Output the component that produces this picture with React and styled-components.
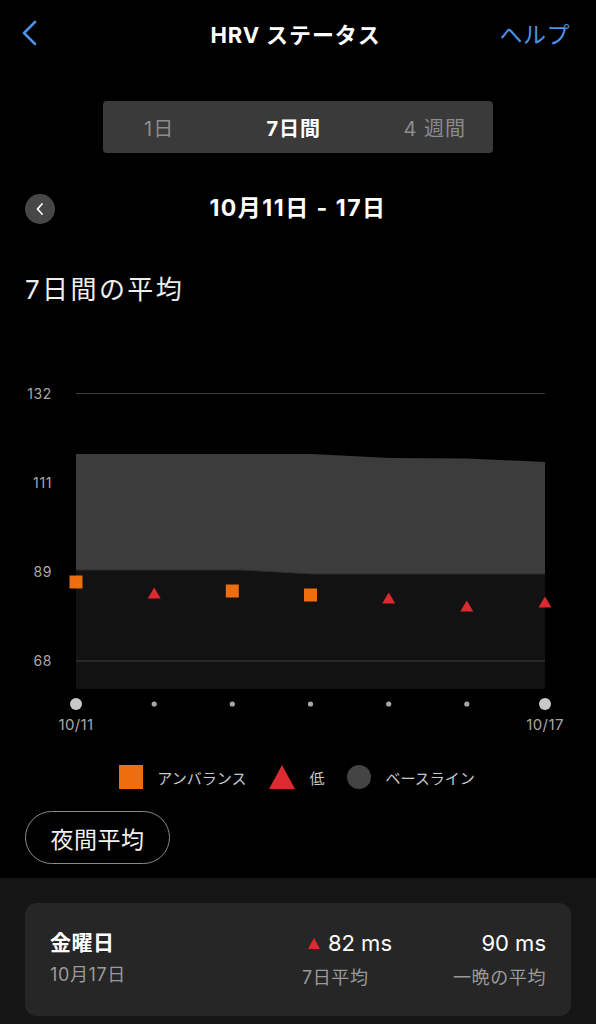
import styled, { createGlobalStyle } from "styled-components";

const GlobalStyle = createGlobalStyle`
  body {
    margin: 0;
    background: #000;
    color: #fff;
    font-family: "Inter", "Noto Sans CJK JP", sans-serif;
  }
`;

const Page = styled.div`
  width: 596px;
  min-height: 1024px;
  background: #000;
`;

const Header = styled.header`
  height: 66px;
  padding: 0 26px 0 21px;
  display: grid;
  grid-template-columns: 1fr auto 1fr;
  align-items: center;
`;

const HeaderTitle = styled.h1`
  margin: 0;
  font-size: 22px;
  font-weight: 700;
  letter-spacing: 0.9px;
`;

const HelpLink = styled.span`
  justify-self: end;
  color: #4a92e8;
  font-size: 23px;
  letter-spacing: 0.5px;
`;

const Segmented = styled.div`
  margin: 35px auto 0;
  width: 390px;
  height: 52px;
  border-radius: 4px;
  background: #3a3a3a;
  display: flex;
  align-items: center;
  justify-content: space-between;
  padding: 0 27px 0 41px;
  box-sizing: border-box;
`;

const Segment = styled.span`
  font-size: 20px;
  letter-spacing: 1px;
  font-weight: ${(p) => (p.$active ? 700 : 400)};
  color: ${(p) => (p.$active ? "#fff" : "#8c8c8c")};
  margin-left: ${(p) => (p.$active ? "10px" : "0")};
`;

const DateRow = styled.div`
  margin-top: 41px;
  height: 30px;
  padding: 0 25px;
  display: grid;
  grid-template-columns: 30px 1fr 30px;
  align-items: center;
`;

const RoundButton = styled.div`
  width: 30px;
  height: 30px;
  border-radius: 50%;
  background: #474747;
  display: flex;
  align-items: center;
  justify-content: center;
`;

const DateTitle = styled.div`
  text-align: center;
  font-size: 23px;
  line-height: 30px;
  font-weight: 700;
  letter-spacing: 1.5px;
  margin-top: -3px;
`;

const Heading = styled.h2`
  margin: 51px 0 0;
  padding-left: 25px;
  line-height: 30px;
  font-size: 26px;
  font-weight: 400;
  letter-spacing: 2.4px;
  color: #eee;
`;

const Chart = styled.svg`
  display: block;
  margin-top: 70px;
`;

const Legend = styled.div`
  margin-top: 30px;
  height: 24px;
  display: flex;
  align-items: center;
  justify-content: center;
  padding-right: 2px;
`;

const LegendItem = styled.div`
  display: flex;
  align-items: center;
  gap: 14px;
  margin-right: 23px;
  &:last-child {
    margin-right: 0;
  }
`;

const LegendText = styled.span`
  font-size: 15px;
  color: #c8c8c8;
`;

const Pill = styled.div`
  margin: 22px 0 0 25px;
  width: 145px;
  height: 53px;
  box-sizing: border-box;
  border: 1.5px solid #8a8a8a;
  border-radius: 27px;
  display: flex;
  align-items: center;
  justify-content: center;
  font-size: 23px;
  letter-spacing: 0.5px;
  color: #f2f2f2;
`;

const Bottom = styled.section`
  margin-top: 14px;
  background: #151515;
  padding: 25px 25px 30px;
`;

const Card = styled.div`
  height: 113px;
  box-sizing: border-box;
  border-radius: 12px;
  background: #262626;
  padding: 26px 25px 0;
  display: grid;
  grid-template-columns: 1fr auto auto;
  column-gap: 61px;
  align-items: start;
`;

const Column = styled.div`
  display: flex;
  flex-direction: column;
  gap: ${(p) => p.$gap}px;
  align-items: ${(p) => (p.$right ? "flex-end" : "flex-start")};
`;

const DayName = styled.div`
  font-size: 21px;
  font-weight: 700;
  line-height: 28px;
  letter-spacing: 0.5px;
`;

const Value = styled.div`
  font-size: 22px;
  line-height: 28px;
  display: flex;
  align-items: center;
  gap: 8px;
  padding-left: ${(p) => p.$indent || 0}px;
`;

const SubText = styled.div`
  font-size: 18px;
  line-height: 24px;
  letter-spacing: 0.6px;
  color: #9a9a9a;
`;

const xs = [76, 154.2, 232.3, 310.5, 388.7, 466.8, 545];
const points = [
  { kind: "sq", y: 582 },
  { kind: "tri", y: 593 },
  { kind: "sq", y: 591 },
  { kind: "sq", y: 595 },
  { kind: "tri", y: 598 },
  { kind: "tri", y: 606 },
  { kind: "tri", y: 602 },
];
const yLabels = [
  { v: "132", y: 394 },
  { v: "111", y: 483 },
  { v: "89", y: 572 },
  { v: "68", y: 661 },
];

const Triangle = ({ cx, cy, w, h, color = "#dc2a30" }) => (
  <polygon
    points={`${cx},${cy - h / 2} ${cx + w / 2},${cy + h / 2} ${cx - w / 2},${cy + h / 2}`}
    fill={color}
  />
);

const HrvChart = () => (
  <Chart width="596" height="360" viewBox="0 375 596 360">
    <rect x="76" y="570" width="469" height="119" fill="#121212" />
    <path
      d="M76 454 L312 454 L390 458 L467 458.5 L545 462 L545 574 L312 574 L240 570 L76 570 Z"
      fill="#3c3c3c"
    />
    <path d="M76 570 L240 570 L312 574 L545 574" stroke="#2b2b2b" strokeWidth="1" fill="none" />
    <line x1="76" x2="545" y1="393.5" y2="393.5" stroke="#3f3f3f" strokeWidth="1.2" />
    <line x1="76" x2="545" y1="661" y2="661" stroke="#3f3f3f" strokeWidth="1.2" />
    {yLabels.map((l) => (
      <text
        key={l.v}
        x="52"
        y={l.y + 5}
        textAnchor="end"
        fontSize="14"
        letterSpacing="0.6"
        fill="#a8a8a8"
        fontFamily="Inter, sans-serif"
      >
        {l.v}
      </text>
    ))}
    {points.map((p, i) =>
      p.kind === "sq" ? (
        <rect key={i} x={xs[i] - 6.5} y={p.y - 6.5} width="13" height="13" fill="#ee6d0f" />
      ) : (
        <Triangle key={i} cx={xs[i]} cy={p.y} w={13} h={11} />
      )
    )}
    {xs.map((x, i) =>
      i === 0 || i === xs.length - 1 ? (
        <circle key={i} cx={x} cy="704" r="6" fill="#c9c9c9" />
      ) : (
        <circle key={i} cx={x} cy="704" r="2.6" fill="#a8a8a8" />
      )
    )}
    <text x="76" y="730" textAnchor="middle" fontSize="15" letterSpacing="0.4" fill="#a8a8a8" fontFamily="Inter, sans-serif">
      10/11
    </text>
    <text x="545" y="730" textAnchor="middle" fontSize="15" letterSpacing="0.4" fill="#a8a8a8" fontFamily="Inter, sans-serif">
      10/17
    </text>
  </Chart>
);

export default function App() {
  return (
    <Page>
      <GlobalStyle />
      <Header>
        <svg width="17" height="26" viewBox="0 0 17 26">
          <path d="M14 2 L3 13 L14 24" stroke="#4a92e8" strokeWidth="2.6" fill="none" strokeLinecap="round" strokeLinejoin="round" />
        </svg>
        <HeaderTitle>HRV ステータス</HeaderTitle>
        <HelpLink>ヘルプ</HelpLink>
      </Header>

      <Segmented>
        <Segment>1日</Segment>
        <Segment $active>7日間</Segment>
        <Segment>4 週間</Segment>
      </Segmented>

      <DateRow>
        <RoundButton>
          <svg width="10" height="14" viewBox="0 0 10 14">
            <path d="M7 2 L2.5 7 L7 12" stroke="#fff" strokeWidth="1.8" fill="none" strokeLinecap="round" strokeLinejoin="round" />
          </svg>
        </RoundButton>
        <DateTitle>10月11日 - 17日</DateTitle>
        <span />
      </DateRow>

      <Heading>7日間の平均</Heading>

      <HrvChart />

      <Legend>
        <LegendItem>
          <svg width="24" height="24"><rect width="24" height="24" fill="#ee6d0f" /></svg>
          <LegendText>アンバランス</LegendText>
        </LegendItem>
        <LegendItem>
          <svg width="26" height="24"><polygon points="13,0 26,24 0,24" fill="#dc2a30" /></svg>
          <LegendText>低</LegendText>
        </LegendItem>
        <LegendItem>
          <svg width="24" height="24"><circle cx="12" cy="12" r="12" fill="#444" /></svg>
          <LegendText>ベースライン</LegendText>
        </LegendItem>
      </Legend>

      <Pill>夜間平均</Pill>

      <Bottom>
        <Card>
          <Column $gap={6}>
            <DayName>金曜日</DayName>
            <SubText>10月17日</SubText>
          </Column>
          <Column $gap={9}>
            <Value $indent={6}>
              <svg width="12" height="11"><polygon points="6,0 12,11 0,11" fill="#dc2a30" /></svg>
              82 ms
            </Value>
            <SubText>7日平均</SubText>
          </Column>
          <Column $gap={9} $right>
            <Value>90 ms</Value>
            <SubText>一晩の平均</SubText>
          </Column>
        </Card>
      </Bottom>
    </Page>
  );
}
